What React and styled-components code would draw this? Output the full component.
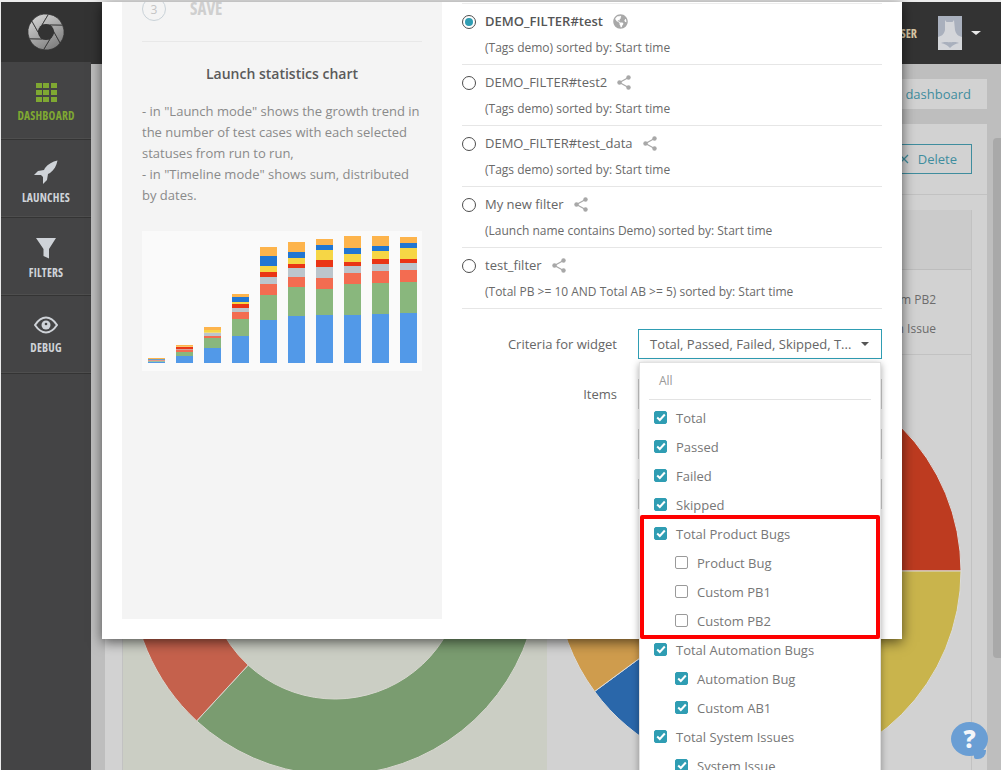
import React from 'react'
import styled, { createGlobalStyle } from 'styled-components'
import { FaGlobeAmericas } from 'react-icons/fa'

const Global = createGlobalStyle`
  html, body { margin: 0; height: 770px; overflow: hidden; background: #ececec; }
  body { font-family: "Open Sans", "Liberation Sans", sans-serif; color: #666; }
  #root { height: 770px; }
  * { box-sizing: border-box; }
`

const Page = styled.div`
  position: relative;
  display: flex;
  height: 770px;
  padding: 2px 0 0 1px;
  overflow: hidden;
`
const Sidebar = styled.nav`
  width: 90px;
  flex: none;
  display: flex;
  flex-direction: column;
  background: #444445;
`
const LogoBox = styled.div`
  height: 60px;
  display: flex;
  align-items: center;
  justify-content: center;
  background: #333;
`
const NavItem = styled.div`
  height: 78px;
  display: flex;
  flex-direction: column;
  align-items: center;
  gap: 7px;
  padding-top: 20px;
  border-bottom: 1px solid #343434;
  box-shadow: inset 0 -1px 0 #4e4e4e;
  color: ${p => (p.$active ? '#7fa832' : '#cfd3d8')};
  svg { flex: none; }
`
const NavLabel = styled.span`
  font-stretch: 75%;
  font-size: 11.5px;
  line-height: 14px;
  font-weight: 700;
  letter-spacing: 0.2px;
`
const GridIcon = styled.div`
  display: grid;
  grid-template-columns: repeat(3, 6px);
  grid-auto-rows: 5px;
  gap: 2px 1.5px;
  margin-top: 1px;
`
const GridDot = styled.span`
  background: #7fa832;
`
const Main = styled.div`
  flex: 1;
  min-width: 0;
  display: flex;
  flex-direction: column;
  background: #bebebe;
`
const TopBar = styled.header`
  height: 62px;
  flex: none;
  display: flex;
  align-items: center;
  justify-content: flex-end;
  background: #333;
  padding-right: 20px;
`
const UserName = styled.span`
  font-stretch: 75%;
  font-size: 12px;
  font-weight: 700;
  color: #d9c9a6;
  margin-right: 21px;
`
const Avatar = styled.div`
  width: 24px;
  height: 34px;
  background: #a9b0bd;
  margin-right: 9px;
  svg { display: block; }
`
const UserCaret = styled.span`
  width: 0;
  height: 0;
  border-left: 5px solid transparent;
  border-right: 5px solid transparent;
  border-top: 4px solid #e8e8e8;
`
const Content = styled.main`
  flex: 1;
  min-height: 0;
  padding: 15px 14px 0;
  display: flex;
  flex-direction: column;
  align-items: flex-end;
`
const GhostButton = styled.div`
  height: 30px;
  flex: none;
  display: flex;
  align-items: center;
  background: #d2d2d2;
  color: #3f8d9e;
  font-size: 13px;
  padding: 0 16px;
  margin-bottom: 15px;
`
const Panel = styled.section`
  align-self: stretch;
  flex: 1;
  min-height: 0;
  background: #d2d2d2;
`
const PanelHead = styled.div`
  height: 71px;
  display: flex;
  align-items: center;
  justify-content: flex-end;
  padding-right: 15px;
  border-bottom: 1px solid #c2c2c2;
`
const DeleteButton = styled.div`
  height: 30px;
  display: flex;
  align-items: center;
  gap: 9px;
  padding: 0 14px 0 18px;
  border: 1px solid #3f8d9e;
  color: #3f8d9e;
  font-size: 13px;
`
const Widget = styled.div`
  margin: 15px 15px 0 17px;
  border-left: 1px solid #c2c2c2;
  border-right: 1px solid #c2c2c2;
`
const WidgetHead = styled.div`
  height: 60px;
  background: #cbcbcb;
  border-bottom: 1px solid #bdbdbd;
`
const Legend = styled.div`
  height: 85px;
  padding: 15px 35px 0 0;
  text-align: right;
  font-size: 12px;
  line-height: 29px;
  color: #6c6c6c;
  border-bottom: 1px solid #c2c2c2;
`
const Charts = styled.div`
  display: flex;
`
const ChartCell = styled.div`
  width: ${p => p.$w}px;
  height: 430px;
  background: ${p => p.$bg};
`
const ScrollThumb = styled.div`
  position: absolute;
  right: 0;
  top: 138px;
  width: 8px;
  height: 520px;
  background: #a9a9a9;
  border-radius: 4px 0 0 4px;
`

const Modal = styled.div`
  position: absolute;
  left: 102px;
  top: 2px;
  width: 800px;
  height: 637px;
  display: flex;
  gap: 20px;
  padding: 0 20px;
  background: #fff;
  overflow: hidden;
  box-shadow: 0 3px 12px rgba(0, 0, 0, 0.6);
`
const InfoPanel = styled.aside`
  width: 320px;
  height: 617px;
  flex: none;
  background: #f4f4f4;
  padding: 0 20px;
`
const Step = styled.div`
  display: flex;
  align-items: center;
  gap: 24px;
  margin-top: -5px;
  padding-bottom: 20px;
  border-bottom: 1px solid #e8e8e8;
`
const StepCircle = styled.span`
  width: 24px;
  height: 24px;
  border-radius: 50%;
  border: 1px solid #c9d2d8;
  display: flex;
  align-items: center;
  justify-content: center;
  font-size: 12px;
  color: #c4c4c4;
`
const StepName = styled.span`
  font-stretch: 75%;
  font-size: 17px;
  line-height: 24px;
  font-weight: 700;
  color: #cfcfcf;
`
const InfoTitle = styled.h3`
  margin: 22px 0 0;
  text-align: center;
  font-size: 14px;
  line-height: 20px;
  font-weight: 600;
  color: #5a5a5a;
`
const InfoText = styled.p`
  margin: 17px 0 0;
  font-size: 13px;
  line-height: 21px;
  color: #8a8a8a;
`
const ChartBox = styled.div`
  margin-top: 25px;
  height: 140px;
  background: #fafafa;
  svg { display: block; }
`
const FormColumn = styled.div`
  width: 420px;
  flex: none;
`
const FilterList = styled.div`
  margin-top: 1px;
  border-top: 1px solid #ececec;
`
const FilterRow = styled.div`
  height: 61px;
  padding: 7px 0 0 23px;
  border-bottom: 1px solid #e6e6e6;
  position: relative;
`
const Radio = styled.span`
  position: absolute;
  left: 0;
  top: 11px;
  width: 14px;
  height: 14px;
  border-radius: 50%;
  border: 1px solid #4d4d4d;
  display: flex;
  align-items: center;
  justify-content: center;
  &::after {
    content: '';
    width: 8px;
    height: 8px;
    border-radius: 50%;
    background: ${p => (p.$checked ? '#2f9db3' : 'transparent')};
  }
`
const FilterName = styled.div`
  display: flex;
  align-items: center;
  gap: 10px;
  height: 20px;
  font-size: 13px;
  font-weight: ${p => (p.$bold ? 600 : 400)};
  color: ${p => (p.$bold ? '#555' : '#666')};
  svg { flex: none; color: #a8a8a8; }
`
const FilterDesc = styled.div`
  margin-top: 7px;
  font-size: 12px;
  line-height: 20px;
  color: #6a6a6a;
`
const FormRows = styled.div`
  margin-top: 20px;
  display: flex;
  flex-direction: column;
  gap: 20px;
`
const FormRow = styled.div`
  display: flex;
  align-items: center;
  gap: 21px;
`
const FormLabel = styled.label`
  width: 155px;
  text-align: right;
  font-size: 13px;
  color: #666;
`
const Control = styled.div`
  width: 244px;
  height: 30px;
  display: flex;
  align-items: center;
  justify-content: space-between;
  padding: 0 11px;
  font-size: 13px;
  color: #666;
  border: 1px solid ${p => (p.$open ? '#2f9db3' : '#cfcfcf')};
`
const Caret = styled.span`
  width: 0;
  height: 0;
  margin-right: 1px;
  border-left: 4px solid transparent;
  border-right: 4px solid transparent;
  border-top: 4px solid #555;
`

const Dropdown = styled.div`
  position: absolute;
  left: 639px;
  top: 362px;
  width: 242px;
  height: 420px;
  background: #fff;
  border: 1px solid #e2e2e2;
  box-shadow: 0 2px 7px rgba(0, 0, 0, 0.35);
  padding: 0 9px;
`
const AllRow = styled.div`
  height: 37px;
  padding: 8px 0 0 10px;
  font-size: 12px;
  line-height: 20px;
  color: #999;
  border-bottom: 1px solid #e3e3e3;
  margin-bottom: 3px;
`
const Option = styled.div`
  height: 29px;
  display: flex;
  align-items: center;
  gap: 9px;
  padding-left: ${p => (p.$child ? 26 : 5)}px;
  font-size: 13px;
  color: #777;
`
const Box = styled.span`
  width: 13px;
  height: 13px;
  flex: none;
  border-radius: 2px;
  display: flex;
  align-items: center;
  justify-content: center;
  background: ${p => (p.$on ? '#2f9db3' : '#fff')};
  border: 1px solid ${p => (p.$on ? '#2f9db3' : '#9a9a9a')};
`
const Highlight = styled.div`
  position: absolute;
  left: 640px;
  top: 515px;
  width: 240px;
  height: 124px;
  border: 4px solid #fe0000;
  border-radius: 2px;
`
const Help = styled.div`
  position: absolute;
  left: 951px;
  top: 722px;
  width: 37px;
  height: 34px;
  border-radius: 50%;
  background: #6a9ed4;
  color: #f4f6fa;
  font-size: 24px;
  font-weight: 800;
  line-height: 34px;
  text-align: center;
  &::after {
    content: '';
    position: absolute;
    left: 23px;
    top: 28px;
    width: 12px;
    height: 9px;
    background: #6a9ed4;
    border-radius: 0 0 8px 2px;
  }
`

const polar = (cx, cy, r, deg) => {
  const a = (deg * Math.PI) / 180
  return [cx + r * Math.cos(a), cy + r * Math.sin(a)]
}

// ring sector, angles clockwise from east
const sector = (cx, cy, ro, ri, from, to) => {
  const [x1, y1] = polar(cx, cy, ro, from)
  const [x2, y2] = polar(cx, cy, ro, to)
  const [x3, y3] = polar(cx, cy, ri, to)
  const [x4, y4] = polar(cx, cy, ri, from)
  const big = to - from > 180 ? 1 : 0
  if (ri === 0) return `M${cx} ${cy}L${x1} ${y1}A${ro} ${ro} 0 ${big} 1 ${x2} ${y2}Z`
  return `M${x1} ${y1}A${ro} ${ro} 0 ${big} 1 ${x2} ${y2}L${x3} ${y3}A${ri} ${ri} 0 ${big} 0 ${x4} ${y4}Z`
}

const Logo = () => {
  const blades = [0, 60, 120, 180, 240, 300].map(t => {
    const a = polar(18, 18, 8, t)
    const b = polar(18, 18, 18, t + 38)
    const c = polar(18, 18, 18, t + 98)
    const d = polar(18, 18, 8, t + 60)
    return `M${a}L${b}A18 18 0 0 1 ${c}L${d}Z`
  })
  return (
    <svg width="36" height="36" viewBox="0 0 36 36">
      <defs>
        <linearGradient id="blade" gradientUnits="userSpaceOnUse" x1="6" y1="2" x2="26" y2="36">
          <stop offset="0" stopColor="#d2d2d2" />
          <stop offset="1" stopColor="#7c7c7c" />
        </linearGradient>
      </defs>
      {blades.map((d, i) => (
        <path key={i} d={d} fill="url(#blade)" stroke="#333" strokeWidth="0.8" />
      ))}
      <circle cx="18" cy="18" r="8" fill="#333" />
    </svg>
  )
}

const RocketIcon = () => (
  <svg width="24" height="24" viewBox="0 0 24 24">
    <path d="M23.500 .5C18.500 1.500 14 4 11 8L10 10 4 11 0 15H7L9 17V24L13 20 14 14 16 13C20 10 22.500 6 23.500 .5Z" fill="currentColor" />
  </svg>
)

const FunnelIcon = () => (
  <svg width="20" height="21" viewBox="0 0 20 21">
    <path d="M0 0H20L13 11V20.500L7.500 18V11Z" fill="currentColor" />
  </svg>
)

const EyeIcon = () => (
  <svg width="24" height="18" viewBox="0 0 24 18">
    <path d="M1 9C5 3 8.500 1.500 12 1.500S19 3 23 9C19 15 15.500 16.500 12 16.500S5 15 1 9Z" fill="none" stroke="currentColor" strokeWidth="2" />
    <circle cx="12" cy="9" r="4.500" fill="currentColor" />
    <circle cx="12" cy="8" r="1.300" fill="#444" />
  </svg>
)

const ShareIcon = () => (
  <svg width="14" height="15" viewBox="0 0 14 15">
    <path d="M11.500 2.500 2.500 7.500 11.500 12.500" fill="none" stroke="currentColor" strokeWidth="1.200" />
    <circle cx="11.500" cy="2.500" r="2.200" fill="currentColor" />
    <circle cx="2.500" cy="7.500" r="2.200" fill="currentColor" />
    <circle cx="11.500" cy="12.500" r="2.200" fill="currentColor" />
  </svg>
)

const Check = () => (
  <svg width="10" height="9" viewBox="0 0 10 9">
    <path d="M1.200 4.500 3.800 7 8.800 1.500" fill="none" stroke="#fff" strokeWidth="2" />
  </svg>
)

const Bat = () => (
  <svg width="24" height="34" viewBox="0 0 24 34">
    <path d="M7 4 8.500 6H14.500L16 4 17 14C18 18 20 20 24 21V34H0V21C4 20 6 18 7 14Z" fill="#d4d6da" />
    <path d="M3 27C8 25 10 27 12 26 14 27 16 25 21 27 17 28 15 29 12 32 9 29 7 28 3 27Z" fill="#a9b0bd" />
  </svg>
)

const barColors = ['#5299e8', '#89b77d', '#f36c51', '#bcc5cc', '#ea3515', '#f6d645', '#2176d2', '#fdb44c']
const bars = [
  [410, 408, 407, 406, 405, 404, 402, 399],
  [393, 381, 375, 373, 366, 365, 365, 360],
  [369, 339, 333, 323, 323, 315, 315, 306],
  [333, 282, 261, 249, 237, 231, 216, 207],
  [285, 210, 177, 156, 141, 123, 93, 66],
  [273, 186, 156, 129, 117, 99, 81, 51],
  [270, 192, 159, 126, 105, 75, 60, 42],
  [270, 177, 144, 123, 111, 87, 69, 33],
  [267, 174, 138, 117, 102, 78, 63, 33],
  [264, 171, 135, 114, 102, 69, 54, 36],
]

const TrendChart = () => (
  <svg width="280" height="140" viewBox="36 18 840 420">
    {bars.map((tops, i) =>
      tops.map((top, j) => {
        const bottom = j === 0 ? 414 : tops[j - 1]
        return <rect key={j} x={54 + i * 84} y={top} width="51" height={bottom - top} fill={barColors[j]} />
      })
    )}
  </svg>
)

const filters = [
  { name: 'DEMO_FILTER#test', desc: '(Tags demo) sorted by: Start time', checked: true },
  { name: 'DEMO_FILTER#test2', desc: '(Tags demo) sorted by: Start time' },
  { name: 'DEMO_FILTER#test_data', desc: '(Tags demo) sorted by: Start time' },
  { name: 'My new filter', desc: '(Launch name contains Demo) sorted by: Start time' },
  { name: 'test_filter', desc: '(Total PB >= 10 AND Total AB >= 5) sorted by: Start time' },
]

const options = [
  { label: 'Total', on: true },
  { label: 'Passed', on: true },
  { label: 'Failed', on: true },
  { label: 'Skipped', on: true },
  { label: 'Total Product Bugs', on: true },
  { label: 'Product Bug', child: true },
  { label: 'Custom PB1', child: true },
  { label: 'Custom PB2', child: true },
  { label: 'Total Automation Bugs', on: true },
  { label: 'Automation Bug', on: true, child: true },
  { label: 'Custom AB1', on: true, child: true },
  { label: 'Total System Issues', on: true },
  { label: 'System Issue', on: true, child: true },
]

const App = () => {
  return (
    <Page>
      <Global />
      <Sidebar>
        <LogoBox><Logo /></LogoBox>
        <NavItem $active>
          <GridIcon>{Array.from({ length: 9 }).map((_, i) => <GridDot key={i} />)}</GridIcon>
          <NavLabel>DASHBOARD</NavLabel>
        </NavItem>
        <NavItem>
          <RocketIcon />
          <NavLabel>LAUNCHES</NavLabel>
        </NavItem>
        <NavItem>
          <FunnelIcon />
          <NavLabel>FILTERS</NavLabel>
        </NavItem>
        <NavItem>
          <EyeIcon />
          <NavLabel>DEBUG</NavLabel>
        </NavItem>
      </Sidebar>
      <Main>
        <TopBar>
          <UserName>USER</UserName>
          <Avatar><Bat /></Avatar>
          <UserCaret />
        </TopBar>
        <Content>
          <GhostButton>Edit dashboard</GhostButton>
          <Panel>
            <PanelHead>
              <DeleteButton>
                <svg width="10" height="10" viewBox="0 0 10 10">
                  <path d="M1 1 9 9M9 1 1 9" stroke="#3f8d9e" strokeWidth="1.300" />
                </svg>
                Delete
              </DeleteButton>
            </PanelHead>
            <Widget>
              <WidgetHead />
              <Legend>
                Custom PB2<br />
                System Issue
              </Legend>
              <Charts>
                <ChartCell $w={424} $bg="#cbcec4">
                  <svg width="424" height="430" viewBox="0 0 424 430">
                    <g stroke="#d8d8d0" strokeWidth="1">
                      <path d={sector(212, 216, 204, 128, -20, 132.7)} fill="#7a9c70" />
                      <path d={sector(212, 216, 204, 128, 132.7, 230)} fill="#c5614c" />
                    </g>
                  </svg>
                </ChartCell>
                <ChartCell $w={424} $bg="#d2d2d2">
                  <svg width="424" height="430" viewBox="0 0 424 430">
                    <g stroke="#dcdcdc" strokeWidth="1">
                      <path d={sector(211, 216, 203, 0, -90, 0)} fill="#bd3b20" />
                      <path d={sector(211, 216, 203, 0, 0, 90)} fill="#c9b44c" />
                      <path d={sector(211, 216, 203, 0, 90, 143.6)} fill="#2a67aa" />
                      <path d={sector(211, 216, 203, 0, 143.6, 270)} fill="#cf9c4d" />
                    </g>
                  </svg>
                </ChartCell>
              </Charts>
            </Widget>
          </Panel>
        </Content>
      </Main>
      <ScrollThumb />

      <Modal>
        <InfoPanel>
          <Step>
            <StepCircle>3</StepCircle>
            <StepName>SAVE</StepName>
          </Step>
          <InfoTitle>Launch statistics chart</InfoTitle>
          <InfoText>
            - in "Launch mode" shows the growth trend in the number of test cases with each selected statuses from run to run,<br />
            - in "Timeline mode" shows sum, distributed by dates.
          </InfoText>
          <ChartBox><TrendChart /></ChartBox>
        </InfoPanel>
        <FormColumn>
          <FilterList>
            {filters.map(f => (
              <FilterRow key={f.name}>
                <Radio $checked={f.checked} />
                <FilterName $bold={f.checked}>
                  {f.name}
                  {f.checked ? <FaGlobeAmericas size={15} /> : <ShareIcon />}
                </FilterName>
                <FilterDesc>{f.desc}</FilterDesc>
              </FilterRow>
            ))}
          </FilterList>
          <FormRows>
            <FormRow>
              <FormLabel>Criteria for widget</FormLabel>
              <Control $open>Total, Passed, Failed, Skipped, T...<Caret /></Control>
            </FormRow>
            <FormRow>
              <FormLabel>Items</FormLabel>
              <Control />
            </FormRow>
            <FormRow>
              <FormLabel />
              <Control />
            </FormRow>
            <FormRow>
              <FormLabel />
              <Control />
            </FormRow>
          </FormRows>
        </FormColumn>
      </Modal>

      <Dropdown>
        <AllRow>All</AllRow>
        {options.map(o => (
          <Option key={o.label} $child={o.child}>
            <Box $on={o.on}>{o.on && <Check />}</Box>
            {o.label}
          </Option>
        ))}
      </Dropdown>
      <Highlight />
      <Help>?</Help>
    </Page>
  )
}

export default App
